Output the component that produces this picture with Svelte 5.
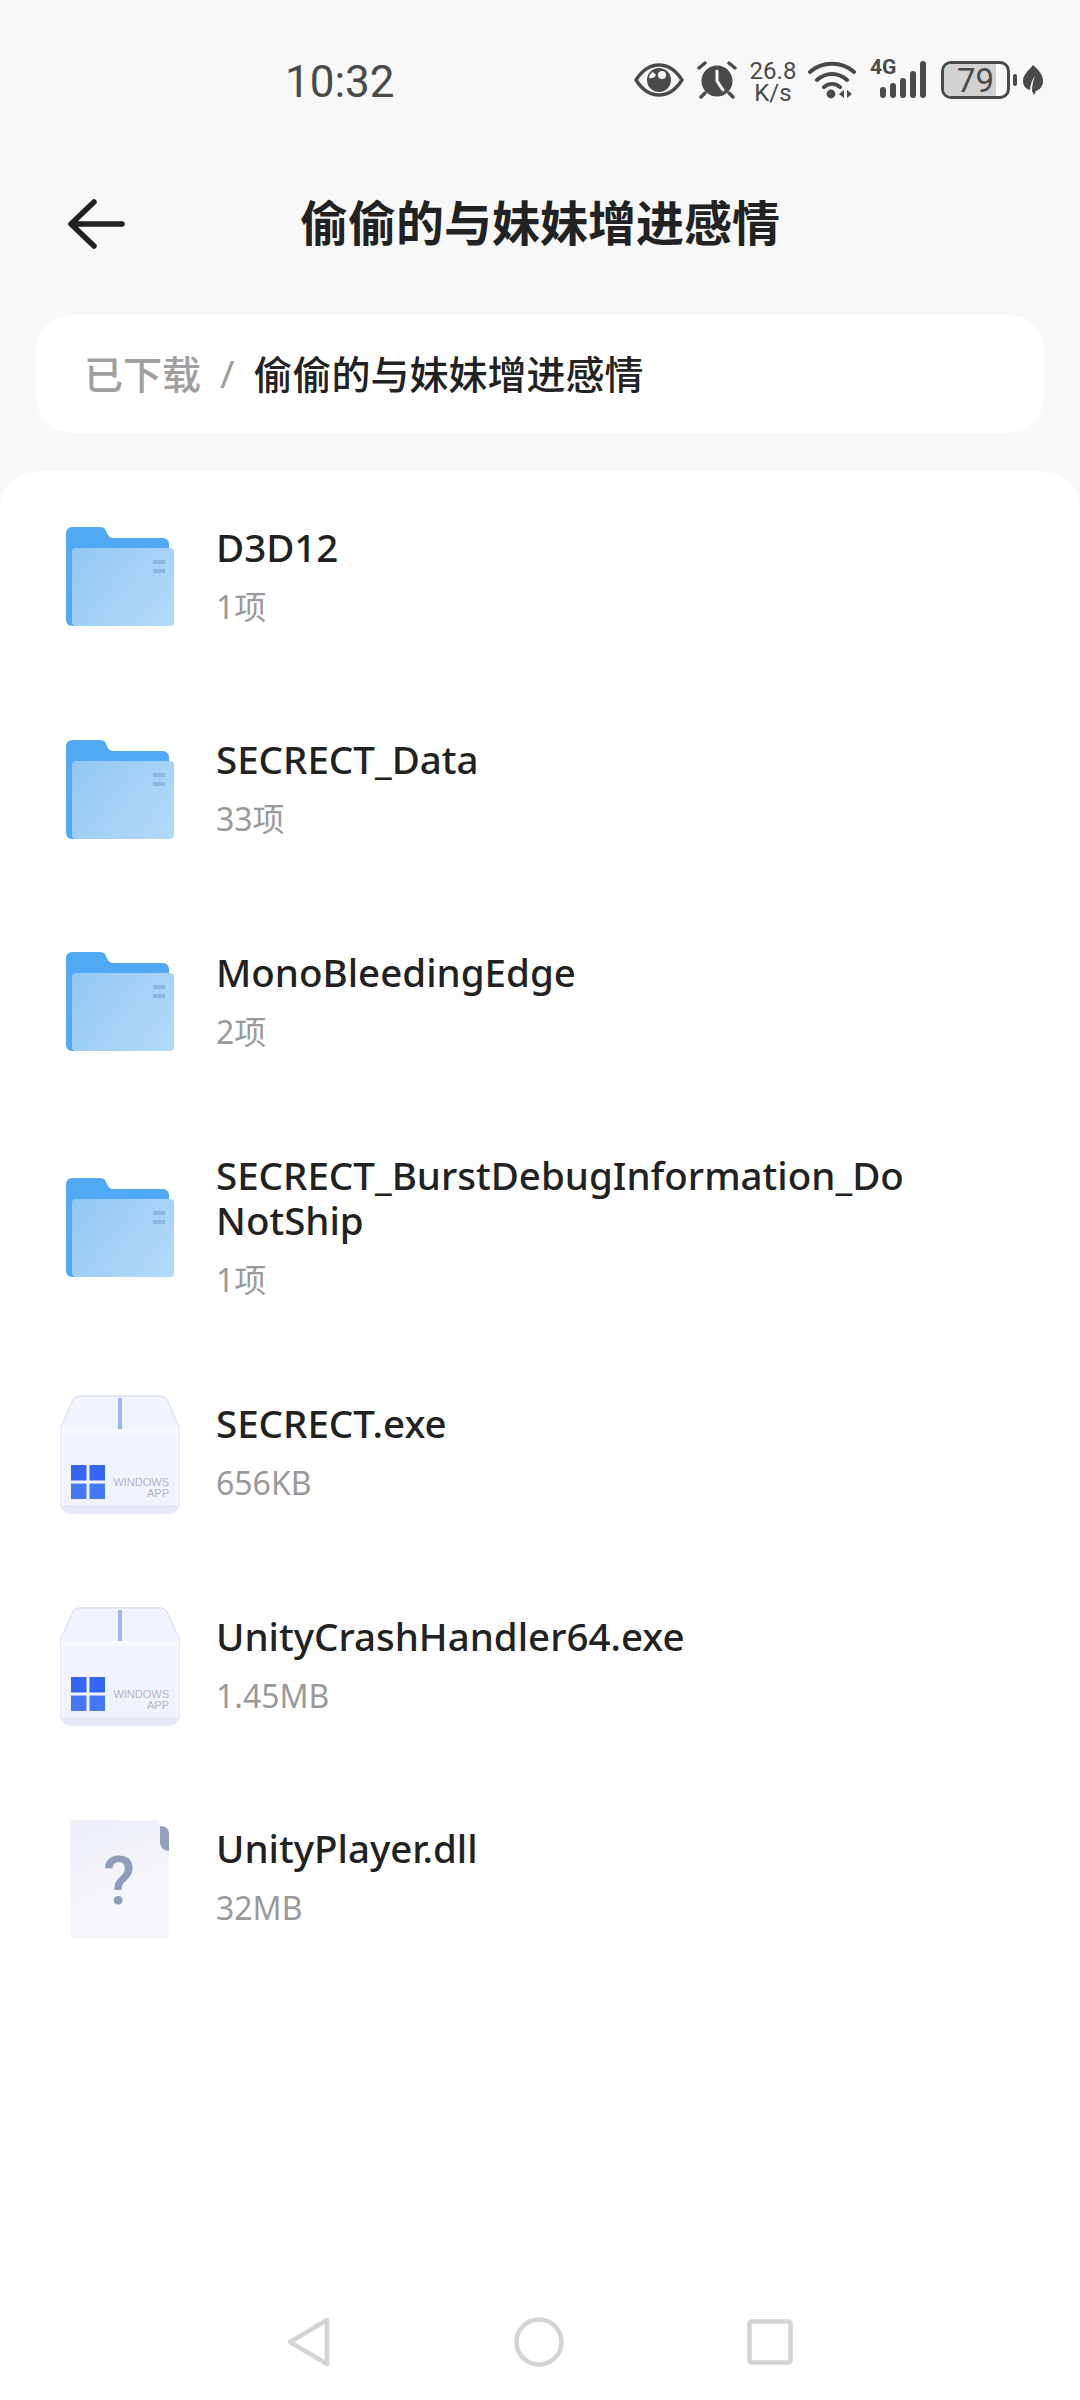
<script lang="ts">
	interface Entry {
		name: string;
		meta: string;
		kind: 'folder' | 'exe' | 'unknown';
	}

	const title = '偷偷的与妹妹增进感情';

	const entries: Entry[] = [
		{ name: 'D3D12', meta: '1项', kind: 'folder' },
		{ name: 'SECRECT_Data', meta: '33项', kind: 'folder' },
		{ name: 'MonoBleedingEdge', meta: '2项', kind: 'folder' },
		{ name: 'SECRECT_BurstDebugInformation_DoNotShip', meta: '1项', kind: 'folder' },
		{ name: 'SECRECT.exe', meta: '656KB', kind: 'exe' },
		{ name: 'UnityCrashHandler64.exe', meta: '1.45MB', kind: 'exe' },
		{ name: 'UnityPlayer.dll', meta: '32MB', kind: 'unknown' }
	];
</script>

<div class="page">
	<div class="status">
		<span class="clock">10:32</span>
		<div class="status-icons">
			<svg class="eye" width="50" height="34" viewBox="0 0 50 34" fill="none">
				<path d="M2 17C9 6 17 2 25 2s16 4 23 15C41 28 33 32 25 32S9 28 2 17Z" stroke="#4a4a4a" stroke-width="3.4" stroke-linejoin="round" />
				<circle cx="25" cy="17" r="12" fill="#4a4a4a" />
				<circle cx="28" cy="12" r="4" fill="#f8f8f8" />
				<path d="M15 15c3 1 6-1 7-3l-3-3c-2 1-4 3-4 6Z" fill="#f8f8f8" />
			</svg>
			<svg class="alarm" width="40" height="38" viewBox="0 0 40 38" fill="none">
				<circle cx="20" cy="20" r="15.5" fill="#4a4a4a" />
				<path d="M20 10v10l6 9" stroke="#f8f8f8" stroke-width="3" stroke-linecap="round" stroke-linejoin="round" />
				<path d="M2 7l6-5M38 7l-6-5M4 36l4-4M36 36l-4-4" stroke="#4a4a4a" stroke-width="3.4" stroke-linecap="round" />
			</svg>
			<div class="speed">
				<span>26.8</span>
				<span>K/s</span>
			</div>
			<svg class="wifi" width="48" height="38" viewBox="0 0 48 38" fill="none">
				<path d="M2 11C14 0 34 0 46 11M9 19c9-8 21-8 30 0M16 26c5-4 11-4 16 0" stroke="#4a4a4a" stroke-width="4" stroke-linecap="round" />
				<circle cx="23" cy="33" r="4.4" fill="#4a4a4a" />
				<path d="M36 29v8l-5-4ZM39 29v8l5-4Z" fill="#4a4a4a" />
			</svg>
			<div class="signal">
				<span class="net">4G</span>
				<svg width="48" height="38" viewBox="0 0 48 38" fill="#4a4a4a">
					<rect x="2" y="26" width="6" height="11" rx="3" />
					<rect x="12" y="22" width="6" height="15" rx="3" />
					<rect x="22" y="17" width="6" height="20" rx="3" />
					<rect x="32" y="10" width="6" height="27" rx="3" />
					<rect x="42" y="0" width="6" height="37" rx="3" />
				</svg>
			</div>
			<div class="battery">
				<div class="battery-fill"></div>
				<span>79</span>
			</div>
			<div class="battery-tip"></div>
			<svg class="leaf" width="20" height="30" viewBox="0 0 20 30" fill="#4a4a4a">
				<path d="M10 0c6 5 10 10 10 16 0 6-4 9-7 10l-2 4-2-4c0-5 1-10 3-15-3 4-5 9-5 14C3 24 0 21 0 16 0 10 5 6 10 0Z" />
			</svg>
		</div>
	</div>

	<header class="header">
		<svg class="back" width="58" height="50" viewBox="0 0 58 50" fill="none">
			<path d="M27 3L4 25l23 22M4 25h51" stroke="#222" stroke-width="5.5" stroke-linecap="round" stroke-linejoin="round" />
		</svg>
		<h1>{title}</h1>
	</header>

	<nav class="crumbs">
		<span class="crumb-root">已下载</span>
		<span class="crumb-sep">/</span>
		<span class="crumb-current">{title}</span>
	</nav>

	<main class="sheet">
		{#each entries as entry}
			<div class="row">
				<div class="icon">
					{#if entry.kind === 'folder'}
						<svg width="120" height="120" viewBox="0 0 120 120" fill="none">
							<path d="M6 16a6 6 0 0 1 6-6h28c3 0 5 1 6 4l2 4c1 2 3 3 5 3h50a6 6 0 0 1 6 6v50H6Z" fill="#52a9f3" />
							<path d="M6 100V50h8v59h-2a6 6 0 0 1-6-6Z" fill="#52a9f3" />
							<rect x="12" y="31" width="102" height="78" rx="4" fill="url(#folderFront)" />
							<rect x="93" y="43" width="12" height="4" fill="#86b9e6" />
							<rect x="93" y="52" width="12" height="4" fill="#86b9e6" />
							<defs>
								<linearGradient id="folderFront" x1="12" y1="31" x2="114" y2="109" gradientUnits="userSpaceOnUse">
									<stop offset="0" stop-color="#93c8f4" />
									<stop offset="1" stop-color="#b4daf9" />
								</linearGradient>
							</defs>
						</svg>
					{:else if entry.kind === 'exe'}
						<svg width="120" height="120" viewBox="0 0 120 120" fill="none">
							<path d="M20 2h80c3 0 5 1 7 4l11 24c1 2 2 4 2 7v70a12 12 0 0 1-12 12H12a12 12 0 0 1-12-12V37c0-3 1-5 2-7L13 6c2-3 4-4 7-4Z" fill="#f2f4fd" stroke="#dfe3f3" stroke-width="1.5" />
							<path d="M1 37c1-2 2-2 4-2h110c2 0 3 0 4 2v3H1Z" fill="#f7f8fe" />
							<rect x="58" y="4" width="4" height="31" fill="#9db5f6" />
							<path d="M2 111h116c0 5-5 8-11 8H13c-6 0-11-3-11-8Z" fill="#e6e9f7" />
							<rect x="11" y="71" width="15.5" height="15.5" fill="#3565f4" />
							<rect x="29.5" y="71" width="15.5" height="15.5" fill="#3565f4" />
							<rect x="11" y="89.5" width="15.5" height="15.5" fill="#4677f6" />
							<rect x="29.5" y="89.5" width="15.5" height="15.5" fill="#4677f6" />
							<text x="109" y="92" text-anchor="end" class="win-label">WINDOWS</text>
							<text x="109" y="103" text-anchor="end" class="win-label">APP</text>
						</svg>
					{:else}
						<svg width="120" height="120" viewBox="0 0 120 120" fill="none">
							<path d="M15 1h80a5 5 0 0 1 5 5v17c0 5 4 9 9 9v83a5 5 0 0 1-5 5H15a5 5 0 0 1-5-5V6a5 5 0 0 1 5-5Z" fill="url(#fileBody)" />
							<path d="M100 7c6 0 9 3 9 8v17c-5 0-9-4-9-9Z" fill="#94a1bd" />
							<text x="59" y="85" text-anchor="middle" class="unknown-mark">?</text>
							<defs>
								<linearGradient id="fileBody" x1="30" y1="1" x2="60" y2="70" gradientUnits="userSpaceOnUse">
									<stop offset="0" stop-color="#edeff7" />
									<stop offset="1" stop-color="#f5f6fb" />
								</linearGradient>
							</defs>
						</svg>
					{/if}
				</div>
				<div class="text">
					<div class="name">{entry.name}</div>
					<div class="meta">{entry.meta}</div>
				</div>
			</div>
		{/each}

		<div class="navbar">
			<svg width="44" height="50" viewBox="0 0 44 50" fill="none">
				<path d="M40 3v44L3 25Z" stroke="#d4d4d4" stroke-width="4.5" stroke-linejoin="round" />
			</svg>
			<svg width="50" height="50" viewBox="0 0 50 50" fill="none">
				<circle cx="25" cy="25" r="22.5" stroke="#d4d4d4" stroke-width="4.5" />
			</svg>
			<svg width="46" height="46" viewBox="0 0 46 46" fill="none">
				<rect x="2.5" y="2.5" width="41" height="41" rx="2" stroke="#d4d4d4" stroke-width="4.5" />
			</svg>
		</div>
	</main>
</div>

<style>
	:global(body) {
		margin: 0;
	}

	.page {
		height: 2400px;
		display: flex;
		flex-direction: column;
		background: #f8f8f8;
		font-family: 'Noto Sans', 'Noto Sans CJK SC', sans-serif;
		color: #222;
		overflow: hidden;
	}

	.status {
		height: 160px;
		display: flex;
		align-items: center;
		justify-content: space-between;
		padding: 0 37px 0 285px;
		box-sizing: border-box;
		color: #4a4a4a;
	}

	.clock {
		margin-top: 3px;
		font-family: Roboto, sans-serif;
		font-size: 44px;
	}

	.status-icons {
		display: flex;
		align-items: center;
	}

	.alarm {
		margin-left: 13px;
	}

	.speed {
		display: flex;
		flex-direction: column;
		align-items: center;
		margin: 3px 0 0 14px;
		width: 44px;
		font-family: Roboto, sans-serif;
		font-size: 24px;
		line-height: 22px;
	}

	.wifi {
		margin-left: 13px;
	}

	.signal {
		position: relative;
		margin-left: 22px;
	}

	.signal svg {
		display: block;
	}

	.net {
		position: absolute;
		left: -8px;
		top: -6px;
		font-family: Roboto, sans-serif;
		font-size: 21px;
		font-weight: 700;
	}

	.battery {
		position: relative;
		width: 69px;
		height: 38px;
		margin-left: 15px;
		box-sizing: border-box;
		border: 3.5px solid #4a4a4a;
		border-radius: 10px;
		display: flex;
		align-items: center;
		justify-content: center;
		overflow: hidden;
		font-family: Roboto, sans-serif;
		font-size: 33px;
	}

	.battery span {
		position: relative;
	}

	.battery-fill {
		position: absolute;
		left: 0;
		top: 0;
		bottom: 0;
		width: 82%;
		background: #d2d2d2;
	}

	.battery-tip {
		width: 4px;
		height: 12px;
		margin-left: 3px;
		border-radius: 2px;
		background: #4a4a4a;
	}

	.leaf {
		margin-left: 6px;
	}

	.header {
		position: relative;
		height: 126px;
		padding-bottom: 6px;
		box-sizing: border-box;
		display: flex;
		align-items: center;
		justify-content: center;
	}

	.back {
		position: absolute;
		left: 67px;
		top: 39px;
	}

	h1 {
		margin: 0;
		font-size: 48px;
		font-weight: 700;
	}

	.crumbs {
		height: 118px;
		margin: 29px 36px 0;
		padding: 0 48px 4px;
		box-sizing: border-box;
		display: flex;
		align-items: center;
		background: #fff;
		border-radius: 36px;
		font-size: 39px;
		font-weight: 500;
	}

	.crumb-root {
		color: #a0a0a0;
	}

	.crumb-sep {
		margin: 0 19px;
		color: #a0a0a0;
		font-weight: 400;
	}

	.sheet {
		flex: 1;
		display: flex;
		flex-direction: column;
		margin-top: 38px;
		background: #fff;
		border-radius: 40px 40px 0 0;
	}

	.row {
		min-height: 212.5px;
		padding: 44.5px 0;
		box-sizing: border-box;
		display: flex;
		align-items: center;
	}

	.icon {
		flex: none;
		width: 120px;
		height: 120px;
		margin-left: 60px;
	}

	.icon svg {
		display: block;
	}

	.text {
		margin: 0 0 3px 36px;
		width: 710px;
	}

	.name {
		font-size: 38.5px;
		line-height: 45px;
		font-weight: 500;
		color: #222;
		word-break: break-all;
	}

	.meta {
		margin-top: 17px;
		font-size: 32px;
		line-height: 40px;
		color: #9a9a9a;
	}

	.win-label {
		font-family: 'Liberation Sans', sans-serif;
		font-size: 11px;
		fill: #b0b4c8;
	}

	.unknown-mark {
		font-family: Roboto, sans-serif;
		font-size: 66px;
		font-weight: 500;
		fill: #8f9dba;
	}

	.navbar {
		margin-top: auto;
		height: 117px;
		display: flex;
		align-items: center;
		justify-content: center;
		gap: 183px;
	}
</style>
